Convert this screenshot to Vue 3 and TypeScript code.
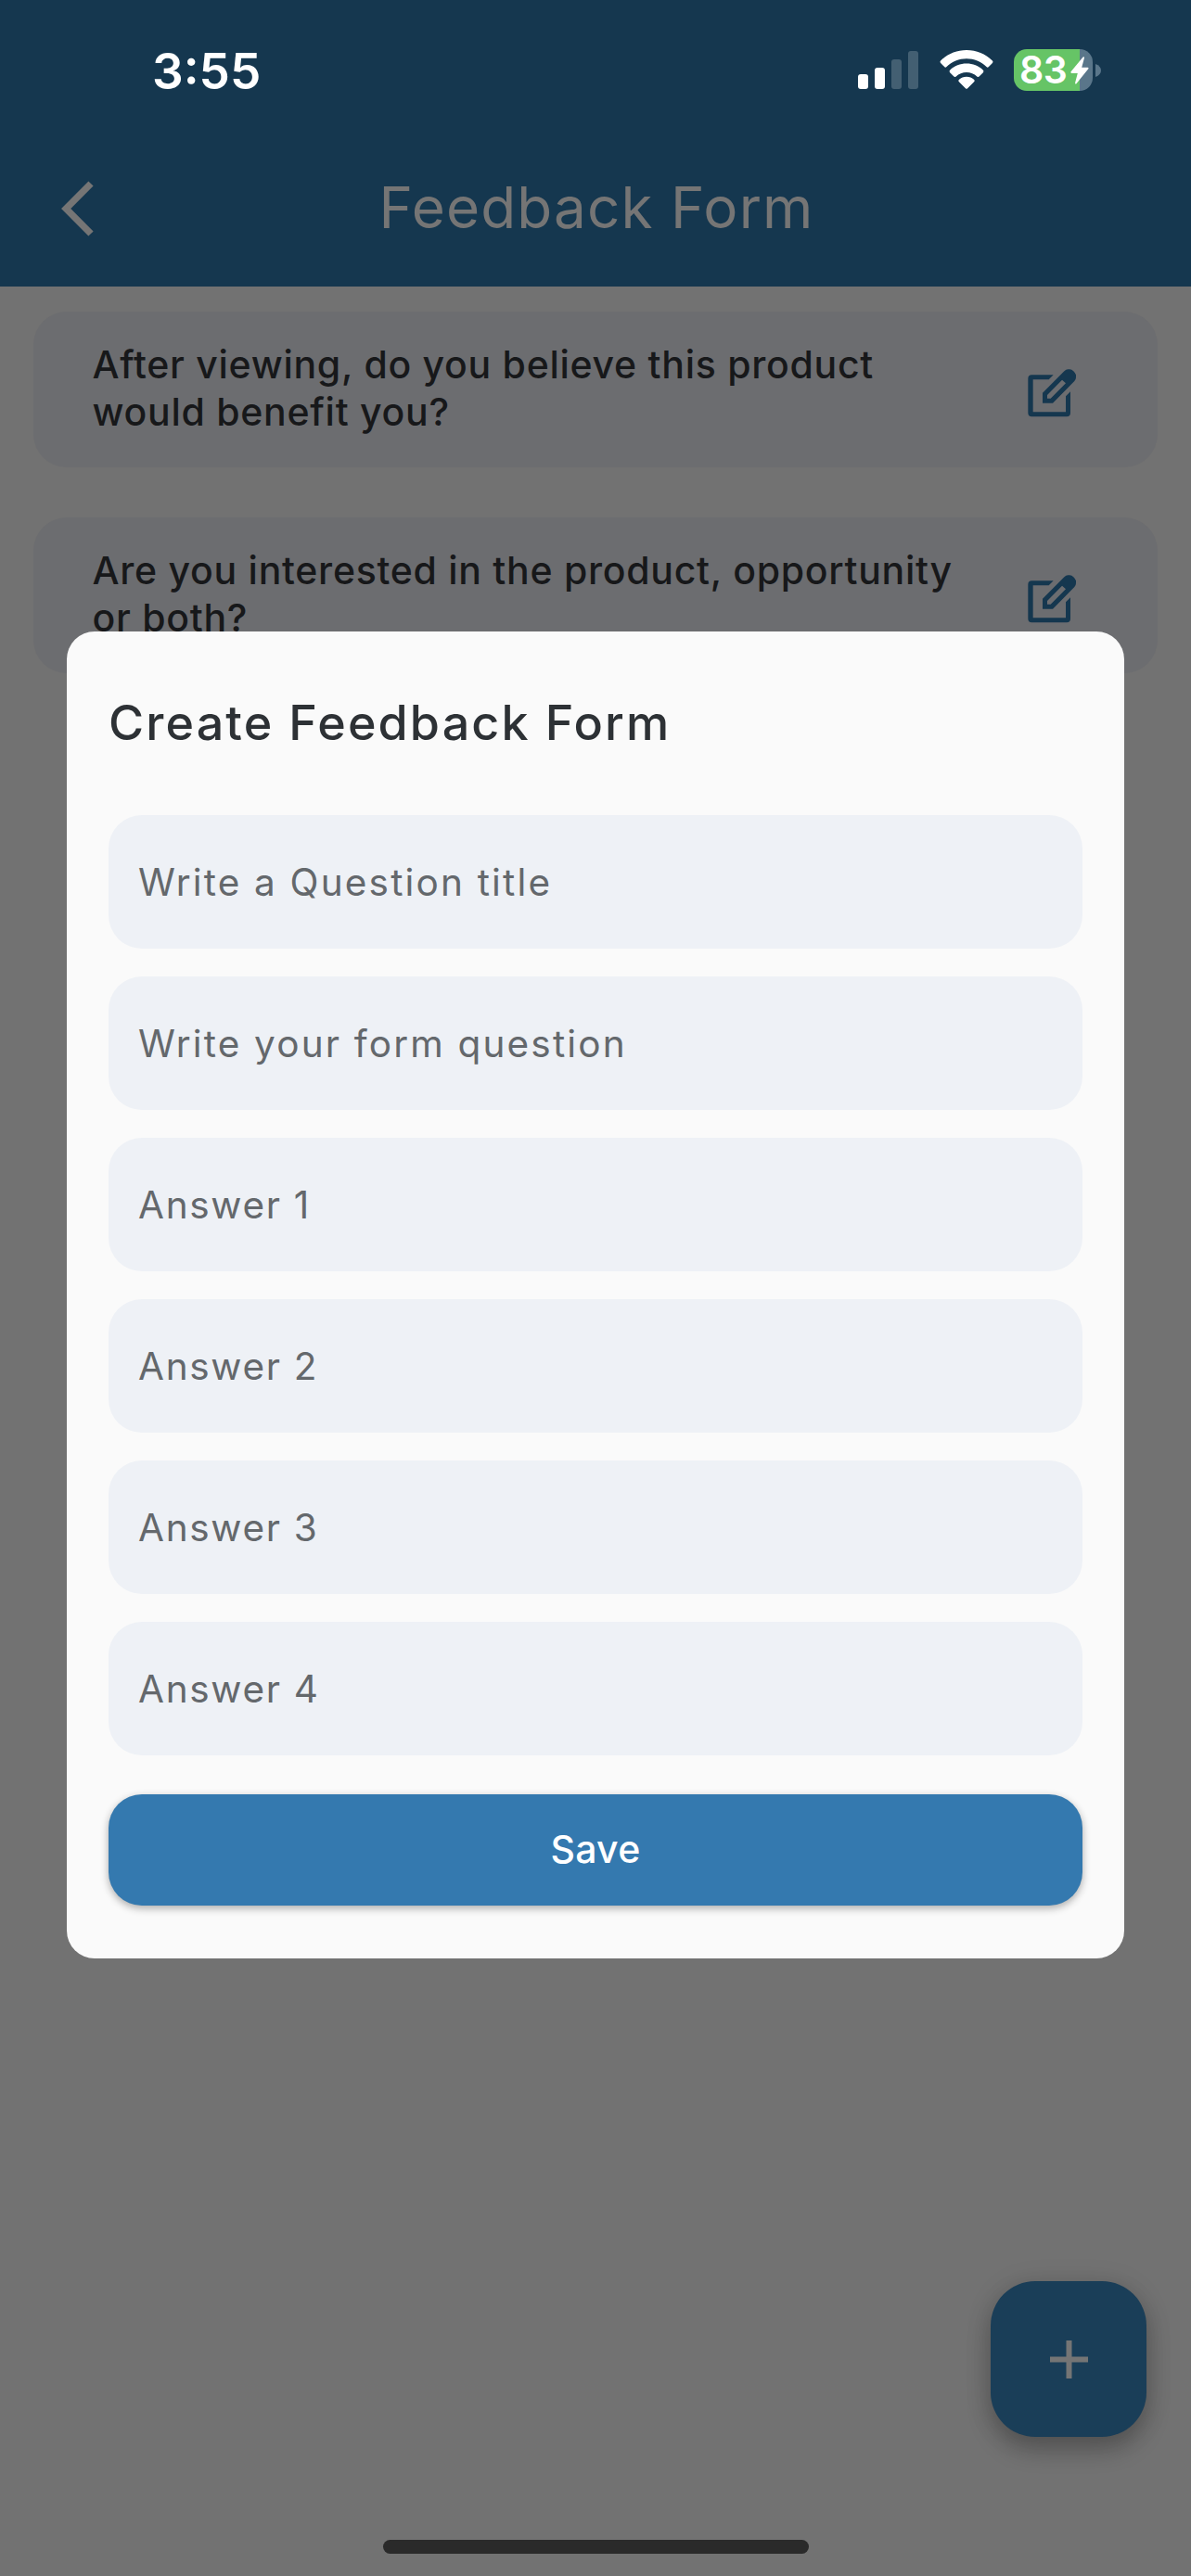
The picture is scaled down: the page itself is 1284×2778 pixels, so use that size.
<script setup lang="ts">
interface Question {
  id: number
  lines: string[]
}

interface Field {
  label: string
  kind: 'prompt' | 'answer'
}

const questions: Question[] = [
  { id: 1, lines: ['After viewing, do you believe this product', 'would benefit you?'] },
  { id: 2, lines: ['Are you interested in the product, opportunity', 'or both?'] },
]

const fields: Field[] = [
  { label: 'Write a Question title', kind: 'prompt' },
  { label: 'Write your form question', kind: 'prompt' },
  { label: 'Answer 1', kind: 'answer' },
  { label: 'Answer 2', kind: 'answer' },
  { label: 'Answer 3', kind: 'answer' },
  { label: 'Answer 4', kind: 'answer' },
]
</script>

<template>
  <div class="screen">
    <header class="header">
      <div class="status">
        <span class="time">3:55</span>
        <div class="indicators">
          <svg class="signal" width="65" height="41" viewBox="0 0 65 41" fill="#fff">
            <rect x="0" y="25" width="11" height="16" rx="3" />
            <rect x="18" y="18" width="11" height="23" rx="3" />
            <rect x="36" y="9" width="11" height="32" rx="3" opacity="0.2" />
            <rect x="54" y="0" width="11" height="41" rx="3" opacity="0.2" />
          </svg>
          <svg class="wifi" width="58" height="42" viewBox="0 0 58 42" fill="#fff">
            <path d="M29 0C39.800 0 49.400 4.200 56.700 11.200Q58.100 12.600 56.900 13.900L52.700 18.200Q51.600 19.200 50.500 18.100C44.700 12.600 37.200 9.300 29 9.300S13.300 12.600 7.500 18.100Q6.400 19.200 5.300 18.200L1.100 13.900Q-0.100 12.600 1.300 11.200C8.600 4.200 18.200 0 29 0Z" />
            <path d="M29 14.600C35.800 14.600 42 17.200 46.700 21.500Q48.200 22.900 46.900 24.200L42.600 28.500Q41.500 29.500 40.300 28.400C37.300 25.600 33.300 23.900 29 23.900S20.700 25.600 17.700 28.400Q16.500 29.500 15.400 28.500L11.100 24.200Q9.800 22.900 11.300 21.500C16 17.200 22.200 14.600 29 14.600Z" />
            <path d="M29 28.700C32.100 28.700 34.900 29.900 37 31.700Q38.400 32.900 37.100 34.200L30.100 41.300Q29 42.400 27.900 41.300L20.900 34.200Q19.600 32.900 21 31.700C23.100 29.900 25.900 28.700 29 28.700Z" />
          </svg>
          <div class="battery">
            <div class="battery-body">
              <span class="level">83</span>
              <svg class="bolt" width="20" height="30" viewBox="0 0 20 30" fill="#fff">
                <path d="M13.600 .5Q15.300-.3 14.900 1.700L12.200 11.800H18.600Q20.200 12 19.100 13.600L6.600 29Q5 30.400 5.100 28.300L7.800 17.900H1.300Q-.3 17.600 .8 16.100Z" />
              </svg>
            </div>
            <svg width="6" height="14" viewBox="0 0 6 14"><path d="M0 0C8 2.500 8 11.500 0 14Z" fill="#5a768a" /></svg>
          </div>
        </div>
      </div>
      <div class="appbar">
        <svg class="back" width="36" height="60" viewBox="0 0 36 60" fill="none" stroke="#757575" stroke-width="7.300">
          <path d="M32 3L5.200 30L32 57" />
        </svg>
        <h1 class="title">Feedback Form</h1>
      </div>
    </header>

    <main class="list">
      <article v-for="q in questions" :key="q.id" class="card">
        <p class="question"><span v-for="line in q.lines" :key="line">{{ line }}</span></p>
        <svg class="edit" width="52" height="52" viewBox="84 53 156 156" fill="#15374f">
          <path d="M97 72H167L152 87H101V192H207V141L222 126V195Q222 207 210 207H97Q85 207 85 195V84Q85 72 97 72Z" />
          <path fill-rule="evenodd" d="M132 163V130L202 60Q208 54 214 54H220Q226 54 232 60T240 72V80Q240 86 235 92L165 163ZM147 148H158L207 99L195 88L147 137Z" />
        </svg>
      </article>
    </main>

    <section class="dialog">
      <h2 class="dialog-title">Create Feedback Form</h2>
      <form class="form" @submit.prevent>
        <div v-for="f in fields" :key="f.label" class="field" :class="f.kind">{{ f.label }}</div>
        <button class="save" type="submit">Save</button>
      </form>
    </section>

    <div class="fab">
      <svg width="42" height="42" viewBox="0 0 42 42" stroke="#757575" stroke-width="6"><path d="M1 21.500H42M21.500 1V42" /></svg>
    </div>
    <div class="home-indicator"></div>
  </div>
</template>

<style>
body {
  margin: 0;
}
</style>

<style scoped>
.screen {
  position: relative;
  width: 1284px;
  height: 2778px;
  overflow: hidden;
  background: #727272;
  font-family: Inter, "Liberation Sans", sans-serif;
}

.header {
  box-sizing: border-box;
  height: 309px;
  background: #15374f;
}

.status {
  display: flex;
  justify-content: space-between;
  align-items: flex-start;
  box-sizing: border-box;
  height: 141px;
  padding: 53px 97px 0 164px;
}

.time {
  margin-top: -8px;
  font-size: 53px;
  font-weight: 600;
  line-height: 64px;
  color: #fff;
}

.indicators {
  display: flex;
  align-items: flex-start;
}

.signal {
  margin: 2px 22.500px 0 0;
}

.wifi {
  margin: 1px 22.500px 0 0;
}

.battery {
  display: flex;
  align-items: center;
  gap: 3px;
}

.battery-body {
  display: flex;
  align-items: center;
  box-sizing: border-box;
  width: 85px;
  height: 45px;
  padding-left: 6px;
  border-radius: 14px;
  background: linear-gradient(90deg, #66c466 71px, #5a768a 71px);
}

.level {
  width: 55px;
  font-size: 41px;
  font-weight: 600;
  line-height: 45px;
  letter-spacing: -0.500px;
  color: #fff;
}

.appbar {
  display: grid;
  grid-template-columns: 102px 1fr 102px;
  align-items: center;
  height: 168px;
}

.back {
  justify-self: end;
}

.title {
  margin: 0 0 3px;
  padding-left: 2px;
  font-size: 62px;
  font-weight: 400;
  line-height: 76px;
  letter-spacing: 1.100px;
  text-align: center;
  color: #757575;
}

.list {
  display: flex;
  flex-direction: column;
  gap: 54px;
  padding: 27px 36px 0;
}

.card {
  display: flex;
  justify-content: space-between;
  box-sizing: border-box;
  height: 168px;
  padding: 32px 88px 0 63.500px;
  border-radius: 36px;
  background: #6c6d70;
}

.question {
  margin: 0;
  font-size: 41px;
  font-weight: 460;
  line-height: 51px;
  letter-spacing: 0.720px;
  color: #17181a;
}

.question span {
  display: block;
  white-space: nowrap;
}

.edit {
  flex: none;
  margin-top: 30px;
}

.dialog {
  position: absolute;
  top: 681px;
  left: 72px;
  box-sizing: border-box;
  width: 1140px;
  height: 1431px;
  padding: 67px 45px 0;
  border-radius: 30px;
  background: #fafafa;
}

.dialog-title {
  margin: 0 0 67px;
  font-size: 52px;
  font-weight: 470;
  line-height: 64px;
  letter-spacing: 2.130px;
  color: #2d3135;
}

.form {
  display: flex;
  flex-direction: column;
  gap: 30px;
}

.field {
  display: flex;
  align-items: center;
  box-sizing: border-box;
  height: 144px;
  padding-left: 32px;
  border-radius: 36px;
  background: #eef1f6;
  font-size: 40.500px;
  color: #64686c;
}

.prompt {
  letter-spacing: 2.170px;
}

.answer {
  letter-spacing: 1.700px;
}

.save {
  height: 120px;
  margin: 12px 0 0;
  padding: 0 0 2px;
  border: 0;
  border-radius: 36px;
  background: #3479af;
  box-shadow: 0 3px 8px rgba(0, 0, 0, 0.32);
  font-family: inherit;
  font-size: 41px;
  font-weight: 480;
  letter-spacing: 0.300px;
  color: #fff;
}

.fab {
  position: absolute;
  top: 2460px;
  left: 1068px;
  display: flex;
  align-items: center;
  justify-content: center;
  width: 168px;
  height: 168px;
  border-radius: 48px;
  background: #1a3e58;
  box-shadow: 0 14px 26px rgba(0, 0, 0, 0.24), 0 2px 30px rgba(0, 0, 0, 0.1);
}

.home-indicator {
  position: absolute;
  top: 2739px;
  left: 413px;
  width: 459px;
  height: 15px;
  border-radius: 8px;
  background: #2a2a2a;
}
</style>
